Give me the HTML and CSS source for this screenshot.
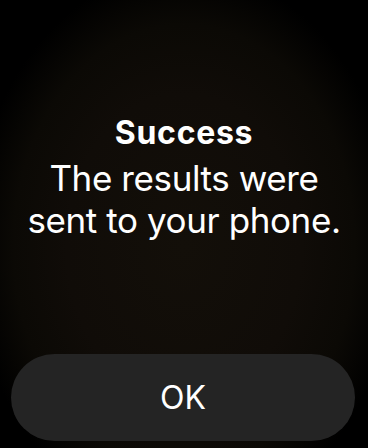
FILE: index.html
```html
<!DOCTYPE html>
<html>
<head>
<meta charset="utf-8">
<link rel="stylesheet" href="styles.css">
</head>
<body>
<div class="screen">
  <div class="message">
    <div class="title">Success</div>
    <div class="body">The results were<br>sent to your phone.</div>
  </div>
  <div class="button">OK</div>
</div>
</body>
</html>
```
FILE: styles.css
```css
html, body {
  margin: 0;
  padding: 0;
  background: #000;
}
.screen {
  width: 368px;
  height: 448px;
  display: flex;
  flex-direction: column;
  font-family: Inter, "Noto Sans", sans-serif;
  color: #fff;
  background:
    radial-gradient(ellipse 58% 62% at 50% 55%, #130f09 0%, #100c08 55%, #0b0905 80%, #000 100%);
  overflow: hidden;
}
.message {
  flex: 1;
  padding-top: 115px;
  text-align: center;
}
.title {
  font-size: 32px;
  font-weight: 700;
  line-height: 36px;
  letter-spacing: 0.7px;
  margin-bottom: 6px;
}
.body {
  font-size: 35px;
  line-height: 42px;
  letter-spacing: -0.4px;
  font-weight: 400;
}
.button {
  margin: 0 13px 7px 11px;
  height: 87px;
  border-radius: 44px;
  background: #242424;
  display: flex;
  align-items: center;
  justify-content: center;
  font-size: 32px;
  font-weight: 400;
}
```
